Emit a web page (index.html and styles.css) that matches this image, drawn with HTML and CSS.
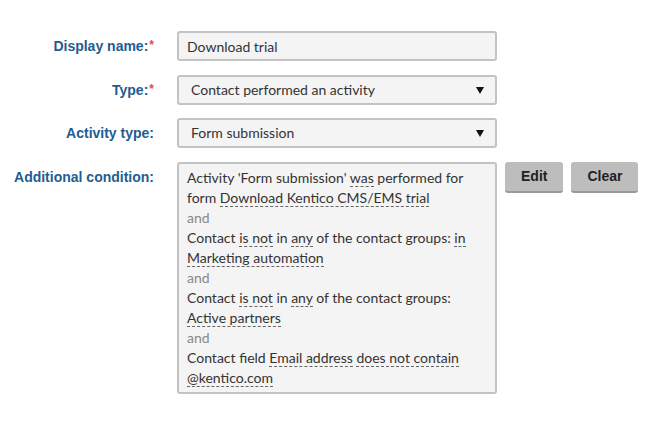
FILE: index.html
```html
<!DOCTYPE html>
<html lang="en">
<head>
    <meta charset="UTF-8">
    <meta name="viewport" content="width=device-width, initial-scale=1.0">
    <title>Contact group rule</title>
    <link rel="stylesheet" href="styles.css">
</head>
<body>
    <form class="rule-form">
        <label class="field-label" for="name">Display name:<span class="required">*</span></label>
        <div class="field">
            <input class="text-input" type="text" id="name" value="Download trial">
        </div>

        <label class="field-label">Type:<span class="required">*</span></label>
        <div class="field">
            <div class="select">Contact performed an activity<span class="arrow"></span></div>
        </div>

        <label class="field-label">Activity type:</label>
        <div class="field">
            <div class="select">Form submission<span class="arrow"></span></div>
        </div>

        <label class="field-label">Additional condition:</label>
        <div class="field condition-field">
            <div class="condition">
                <div>Activity 'Form submission' <span class="param">was</span> performed for form <span class="param">Download Kentico CMS/EMS trial</span></div>
                <div class="op">and</div>
                <div>Contact <span class="param">is not</span> in <span class="param">any</span> of the contact groups: <span class="param">in</span> <span class="param">Marketing automation</span></div>
                <div class="op">and</div>
                <div>Contact <span class="param">is not</span> in <span class="param">any</span> of the contact groups: <span class="param">Active partners</span></div>
                <div class="op">and</div>
                <div>Contact field <span class="param">Email address</span> <span class="param">does not contain</span> <span class="param">@kentico.com</span></div>
            </div>
            <button type="button" class="btn">Edit</button>
            <button type="button" class="btn">Clear</button>
        </div>
    </form>
</body>
</html>
```

FILE: styles.css
```css
body {
    margin: 0;
    background: #fff;
    font-family: Lato, "Open Sans", sans-serif;
    font-size: 14px;
    color: #333;
}
.rule-form {
    display: grid;
    grid-template-columns: 154px 1fr;
    column-gap: 23px;
    row-gap: 13.67px;
    padding: 31px 0 0 0;
}
.field-label {
    justify-self: end;
    align-self: start;
    height: 30px;
    line-height: 30px;
    font-family: "Liberation Sans", Arial, sans-serif;
    font-weight: bold;
    font-size: 14px;
    color: #1f5d91;
    white-space: nowrap;
}
.required {
    color: #e5474f;
    font-size: 12px;
    line-height: 0;
    margin-left: 1px;
    vertical-align: 2px;
}
.field {
    display: flex;
    align-items: flex-start;
}
.text-input,
.select {
    display: block;
    box-sizing: border-box;
    width: 320px;
    height: 30px;
    margin: 0;
    border: 2px solid #c3c3c3;
    border-radius: 3px;
    background: #f4f4f4;
    font-family: Lato, "Open Sans", sans-serif;
    font-size: 14px;
    color: #333;
}
.text-input {
    padding: 0 8px;
}
.select {
    position: relative;
    line-height: 26px;
    padding: 0 12px;
}
.arrow {
    position: absolute;
    right: 11px;
    top: 10px;
    border-left: 4px solid transparent;
    border-right: 4px solid transparent;
    border-top: 7px solid #111;
}
.condition {
    box-sizing: border-box;
    width: 320px;
    padding: 4px 8px 4px;
    border: 2px solid #c3c3c3;
    border-radius: 3px;
    background: #f4f4f4;
    line-height: 20px;
}
.op {
    color: #888;
}
.param {
    border-bottom: 1px dashed #666;
}
.btn {
    margin-left: 8px;
    height: 31px;
    padding: 0 16px;
    border: none;
    border-bottom: 2px solid #999;
    border-radius: 3px;
    background: #bdbdbd;
    font-family: "Liberation Sans", Arial, sans-serif;
    font-weight: bold;
    font-size: 14px;
    color: #222;
    cursor: pointer;
}
```
